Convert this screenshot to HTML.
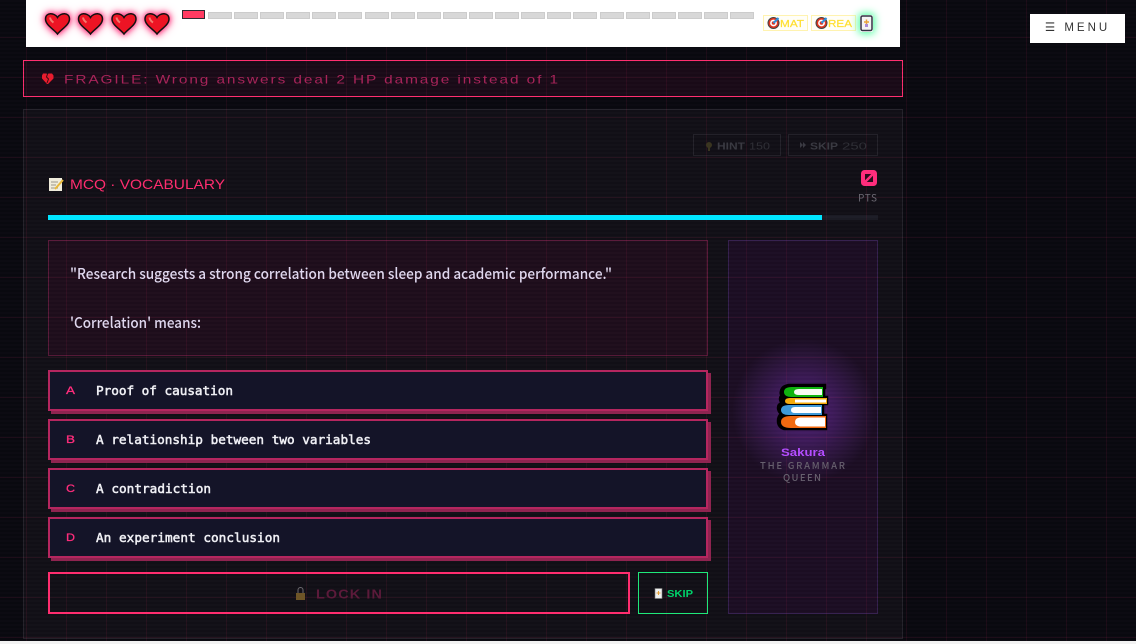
<!DOCTYPE html>
<html lang="en"><head><meta charset="utf-8"><title>MCQ Vocabulary</title>
<style>
html,body{margin:0;padding:0;width:1136px;height:644px;overflow:hidden;background:#0a0910}
.a{position:absolute;box-sizing:border-box}
#grid{left:0;top:0;width:1136px;height:644px;z-index:2;pointer-events:none;
background-image:
linear-gradient(to right,rgba(255,45,111,.075) 1px,transparent 1px),
linear-gradient(to bottom,rgba(255,45,111,.075) 1px,transparent 1px),
repeating-linear-gradient(to bottom,rgba(255,255,255,.006) 0 2px,rgba(0,0,0,.05) 2px 4px);
background-size:40px 40px,40px 40px,100% 4px;background-position:26px 0,0 37px,0 0}
.opt{left:48px;width:660px;height:41px;border:2px solid #b5265f;background:#141428;box-shadow:3px 3px 0 #8f2450;z-index:3}
.seg{top:12px;width:24px;height:7px;background:#d8d8d8;border:1px solid #ccc}
.badge{top:15px;width:45px;height:16px;border:1px solid #fff3b0;background:#fffef8}
#ov{left:0;top:0;z-index:5}
text{white-space:pre}
.d{font-family:"Liberation Sans",sans-serif}
.m{font-family:"DejaVu Sans Mono",monospace;font-size:12.7px;fill:#f0f0f5;stroke:#f0f0f5;stroke-width:.5}
.n{font-family:"Noto Sans CJK SC","Liberation Sans",sans-serif}
.hg{filter:drop-shadow(0 0 3px #ff2d78) drop-shadow(0 0 4px #ff6aa0)}
</style></head><body>
<div class="a" style="left:23px;top:109px;width:880px;height:530px;background:#121017;border:1px solid #25232b"></div>
<div class="a" style="left:23px;top:60px;width:880px;height:37px;background:#1a0b18;border:1.5px solid #ff2d6f"></div>
<div class="a" style="left:48px;top:240px;width:660px;height:116px;background:#1f0e1c;border:1px solid #5a1a3a"></div>
<div class="a" style="left:728px;top:240px;width:150px;height:374px;background:radial-gradient(circle 72px at 75px 170px,#4f2075 0%,#3f1b5c 40%,#281436 80%,#1c0e24 100%);border:1px solid #35204f"></div>
<div class="a" style="left:48px;top:215px;width:830px;height:5px;background:#1c1c26"></div>
<div class="a" style="left:693px;top:134px;width:88px;height:22px;border:1px solid #25232b"></div>
<div class="a" style="left:788px;top:134px;width:90px;height:22px;border:1px solid #25232b"></div>
<div class="a" id="grid"></div>
<div class="a" style="left:48px;top:215px;width:774px;height:5px;background:#00e5ff;z-index:3"></div>
<div class="a opt" style="top:370px"></div>
<div class="a opt" style="top:419px"></div>
<div class="a opt" style="top:468px"></div>
<div class="a opt" style="top:517px"></div>
<div class="a" style="left:48px;top:572px;width:582px;height:42px;border:2px solid #ff2d6f;z-index:3"></div>
<div class="a" style="left:638px;top:572px;width:70px;height:42px;border:1px solid #1fe87a;z-index:3"></div>
<div class="a" style="left:0;top:641px;width:1136px;height:3px;background:#f2f2f2;z-index:4"></div>

<div class="a" style="left:26px;top:0;width:874px;height:47px;background:#fff;z-index:4">
<div class="a" style="left:156px;top:10px;width:23px;height:9px;background:#ff3b62;border:1px solid #2c2c33"></div>
<div class="a seg" style="left:182px"></div><div class="a seg" style="left:208px"></div><div class="a seg" style="left:234px"></div><div class="a seg" style="left:260px"></div><div class="a seg" style="left:286px"></div><div class="a seg" style="left:312px"></div><div class="a seg" style="left:339px"></div><div class="a seg" style="left:365px"></div><div class="a seg" style="left:391px"></div><div class="a seg" style="left:417px"></div><div class="a seg" style="left:443px"></div><div class="a seg" style="left:469px"></div><div class="a seg" style="left:495px"></div><div class="a seg" style="left:521px"></div><div class="a seg" style="left:547px"></div><div class="a seg" style="left:574px"></div><div class="a seg" style="left:600px"></div><div class="a seg" style="left:626px"></div><div class="a seg" style="left:652px"></div><div class="a seg" style="left:678px"></div><div class="a seg" style="left:704px"></div>
<div class="a badge" style="left:737px"></div>
<div class="a badge" style="left:785px"></div>
<div class="a" style="left:834px;top:15px;width:13px;height:17px;border-radius:2px;box-shadow:0 0 8px 2px #5dffa8"></div>
</div>
<div class="a" style="left:1030px;top:14px;width:95px;height:29px;background:#fff;z-index:4;font:11.5px/29px 'Liberation Sans',sans-serif;letter-spacing:3px;color:#333;text-align:center;white-space:nowrap">☰ MENU</div>

<svg class="a" id="ov" width="1136" height="644" viewBox="0 0 1136 644">
<defs>
<path id="h" d="M0-5.500C-3-10.500-12-11-12-4-12 2-4 6 0 11 4 6 12 2 12-4 12-11 3-10.500 0-5.500z"/>
<g id="heart" class="hg"><use href="#h" fill="#ed1424" stroke="#111" stroke-width="1.500"/><path d="M-7.500-5.500q.5 3 3.500 5" stroke="#f37a6e" stroke-width="2" fill="none"/></g>
<g id="tg"><circle r="5.500" fill="#e0341f" stroke="#444" stroke-width="1"/><circle r="3.400" fill="#fff"/><circle r="1.800" fill="#e0341f"/><path d="M0 0 5-5" stroke="#2f8fdc" stroke-width="2"/></g>
</defs>

<use href="#heart" x="57.500" y="23"/><use href="#heart" x="90.500" y="23"/><use href="#heart" x="124" y="23"/><use href="#heart" x="157" y="23"/>

<use href="#tg" x="773.500" y="23"/>
<text class="d" x="780" y="27" font-size="10.500" fill="#ffdf30" stroke="#ffdf30" stroke-width=".2" textLength="24" lengthAdjust="spacingAndGlyphs">MAT</text>
<use href="#tg" x="821.500" y="23"/>
<text class="d" x="828" y="27" font-size="10.500" fill="#ffdf30" stroke="#ffdf30" stroke-width=".2" textLength="24" lengthAdjust="spacingAndGlyphs">REA</text>
<rect x="861" y="16" width="11" height="14.500" rx="1.500" fill="#f4f4f4" stroke="#334" stroke-width="1.500"/>
<path d="M864 22h5M866.500 19.500v5" stroke="#e8a23a" stroke-width="1.500"/><rect x="865" y="24" width="3" height="3" fill="#a98ad8"/>

<path d="M43 73.500h3.500l1 1 1-1H52l1.500 2v3L48 84h-1l-5-5.500v-3z" fill="#e81c2e"/>
<path d="M47.500 74 46.500 77 48.500 79 47 83" stroke="#3a0b12" stroke-width="1" fill="none"/>
<text class="d" x="64" y="83.500" font-size="12" letter-spacing="1.500" fill="#a8245a" textLength="496" lengthAdjust="spacingAndGlyphs">FRAGILE: Wrong answers deal 2 HP damage instead of 1</text>

<circle cx="709" cy="145" r="3" fill="#3a3520"/><rect x="708" y="147" width="2" height="4" fill="#3a3520"/>
<text class="d" x="717" y="149.500" font-size="10" font-weight="700" fill="#3a3a42" textLength="28" lengthAdjust="spacingAndGlyphs">HINT</text>
<text class="d" x="749" y="149.500" font-size="10" fill="#2f2f36" textLength="21" lengthAdjust="spacingAndGlyphs">150</text>
<path d="M800 142v6l3-3zM803 142v6l3-3z" fill="#3a3a42"/>
<text class="d" x="810" y="149.500" font-size="10" font-weight="700" fill="#3a3a42" textLength="28" lengthAdjust="spacingAndGlyphs">SKIP</text>
<text class="d" x="842" y="149.500" font-size="10" fill="#2f2f36" textLength="25" lengthAdjust="spacingAndGlyphs">250</text>

<rect x="49" y="178" width="13" height="13" fill="#f0ecdc"/><path d="M51 182h7M51 185h5M51 188h7" stroke="#9a968a" stroke-width="1"/><path d="M55 189 63 180" stroke="#e8b83a" stroke-width="2"/>
<text class="d" x="70" y="189" font-size="14" fill="#ff2d6f" textLength="155" lengthAdjust="spacingAndGlyphs">MCQ · VOCABULARY</text>

<rect x="861" y="170" width="16" height="16" rx="3.500" fill="#ff2d7c"/>
<rect x="865" y="174" width="8" height="8" fill="#2a0c1c"/><path d="M864 183 874 173" stroke="#ff2d7c" stroke-width="2.500"/>
<text class="n" x="858" y="201.500" font-size="10" fill="#6b6872" textLength="19">PTS</text>

<text class="n" x="70" y="279" font-size="14.800" font-weight="500" fill="#dfd7ee" textLength="542" lengthAdjust="spacingAndGlyphs">"Research suggests a strong correlation between sleep and academic performance."</text>
<text class="n" x="70" y="328" font-size="14.800" font-weight="500" fill="#dfd7ee" textLength="131" lengthAdjust="spacingAndGlyphs">'Correlation' means:</text>

<g class="d" font-size="11" fill="#ff2d7c" stroke="#ff2d7c" stroke-width=".3">
<text x="66" y="394" textLength="9" lengthAdjust="spacingAndGlyphs">A</text>
<text x="66" y="443" textLength="9" lengthAdjust="spacingAndGlyphs">B</text>
<text x="66" y="492" textLength="9" lengthAdjust="spacingAndGlyphs">C</text>
<text x="66" y="541" textLength="9" lengthAdjust="spacingAndGlyphs">D</text>
</g>
<text class="m" x="96" y="395" textLength="137">Proof of causation</text>
<text class="m" x="96" y="444" textLength="275">A relationship between two variables</text>
<text class="m" x="96" y="493" textLength="115">A contradiction</text>
<text class="m" x="96" y="542" textLength="184">An experiment conclusion</text>

<rect x="296" y="593" width="9" height="7" fill="#6e5527"/>
<path d="M298 593v-3a2.500 2.500 0 0 1 5 0v3" fill="none" stroke="#6d6a70" stroke-width="1"/>
<text class="d" x="316" y="598.500" font-size="13" font-weight="700" fill="#5c1a3a" textLength="67" lengthAdjust="spacingAndGlyphs" letter-spacing="1">LOCK IN</text>

<rect x="655" y="588.500" width="7" height="10" fill="#efefef" stroke="#777" stroke-width=".6"/>
<path d="M656.500 593h4M658.500 591v4" stroke="#e8a23a" stroke-width="1"/>
<text class="d" x="667" y="597" font-size="10" font-weight="700" fill="#00d26a" textLength="26" lengthAdjust="spacingAndGlyphs">SKIP</text>

<g>
<path d="M789 385h36v3h-1v9h3v7h-4v11h3v14h-42q-6-2-6-8 0-5 3-7-3-3-3-6 0-4 4-5-2-2-2-4 0-3 2-3-2-2-1-5 1-5 8-6z" fill="#000" stroke="#000" stroke-width="2.500"/>
<path d="M792 387h31v10h-31q-8 0-8-5t8-5z" fill="#0fb30f"/>
<path d="M799 389h23v6h-23q-5 0-5-3t5-3z" fill="#f7fbf4"/>
<path d="M790 398h37v6h-37q-5 0-5-3t5-3z" fill="#f5ab0a"/>
<path d="M795 399.500h31v3h-31z" fill="#fff"/>
<path d="M789 405h33v10h-33q-8 0-8-5t8-5z" fill="#3f9ad8"/>
<path d="M795 407h26v6h-26q-4 0-4-3t4-3z" fill="#fff"/>
<path d="M791 416h35v12h-35q-10 0-10-6t10-6z" fill="#f26a10"/>
<path d="M800 417.500h25v9h-25q-5-.5-5-4.500t5-4.500z" fill="#fff"/>
</g>
<text class="d" x="781" y="456" font-size="11" font-weight="700" fill="#b44dff" textLength="44" lengthAdjust="spacingAndGlyphs">Sakura</text>
<text class="n" x="760" y="469" font-size="9.500" font-weight="500" fill="#67606e" textLength="85">THE GRAMMAR</text>
<text class="n" x="783" y="481" font-size="9.500" font-weight="500" fill="#67606e" textLength="38">QUEEN</text>
</svg>
</body></html>
